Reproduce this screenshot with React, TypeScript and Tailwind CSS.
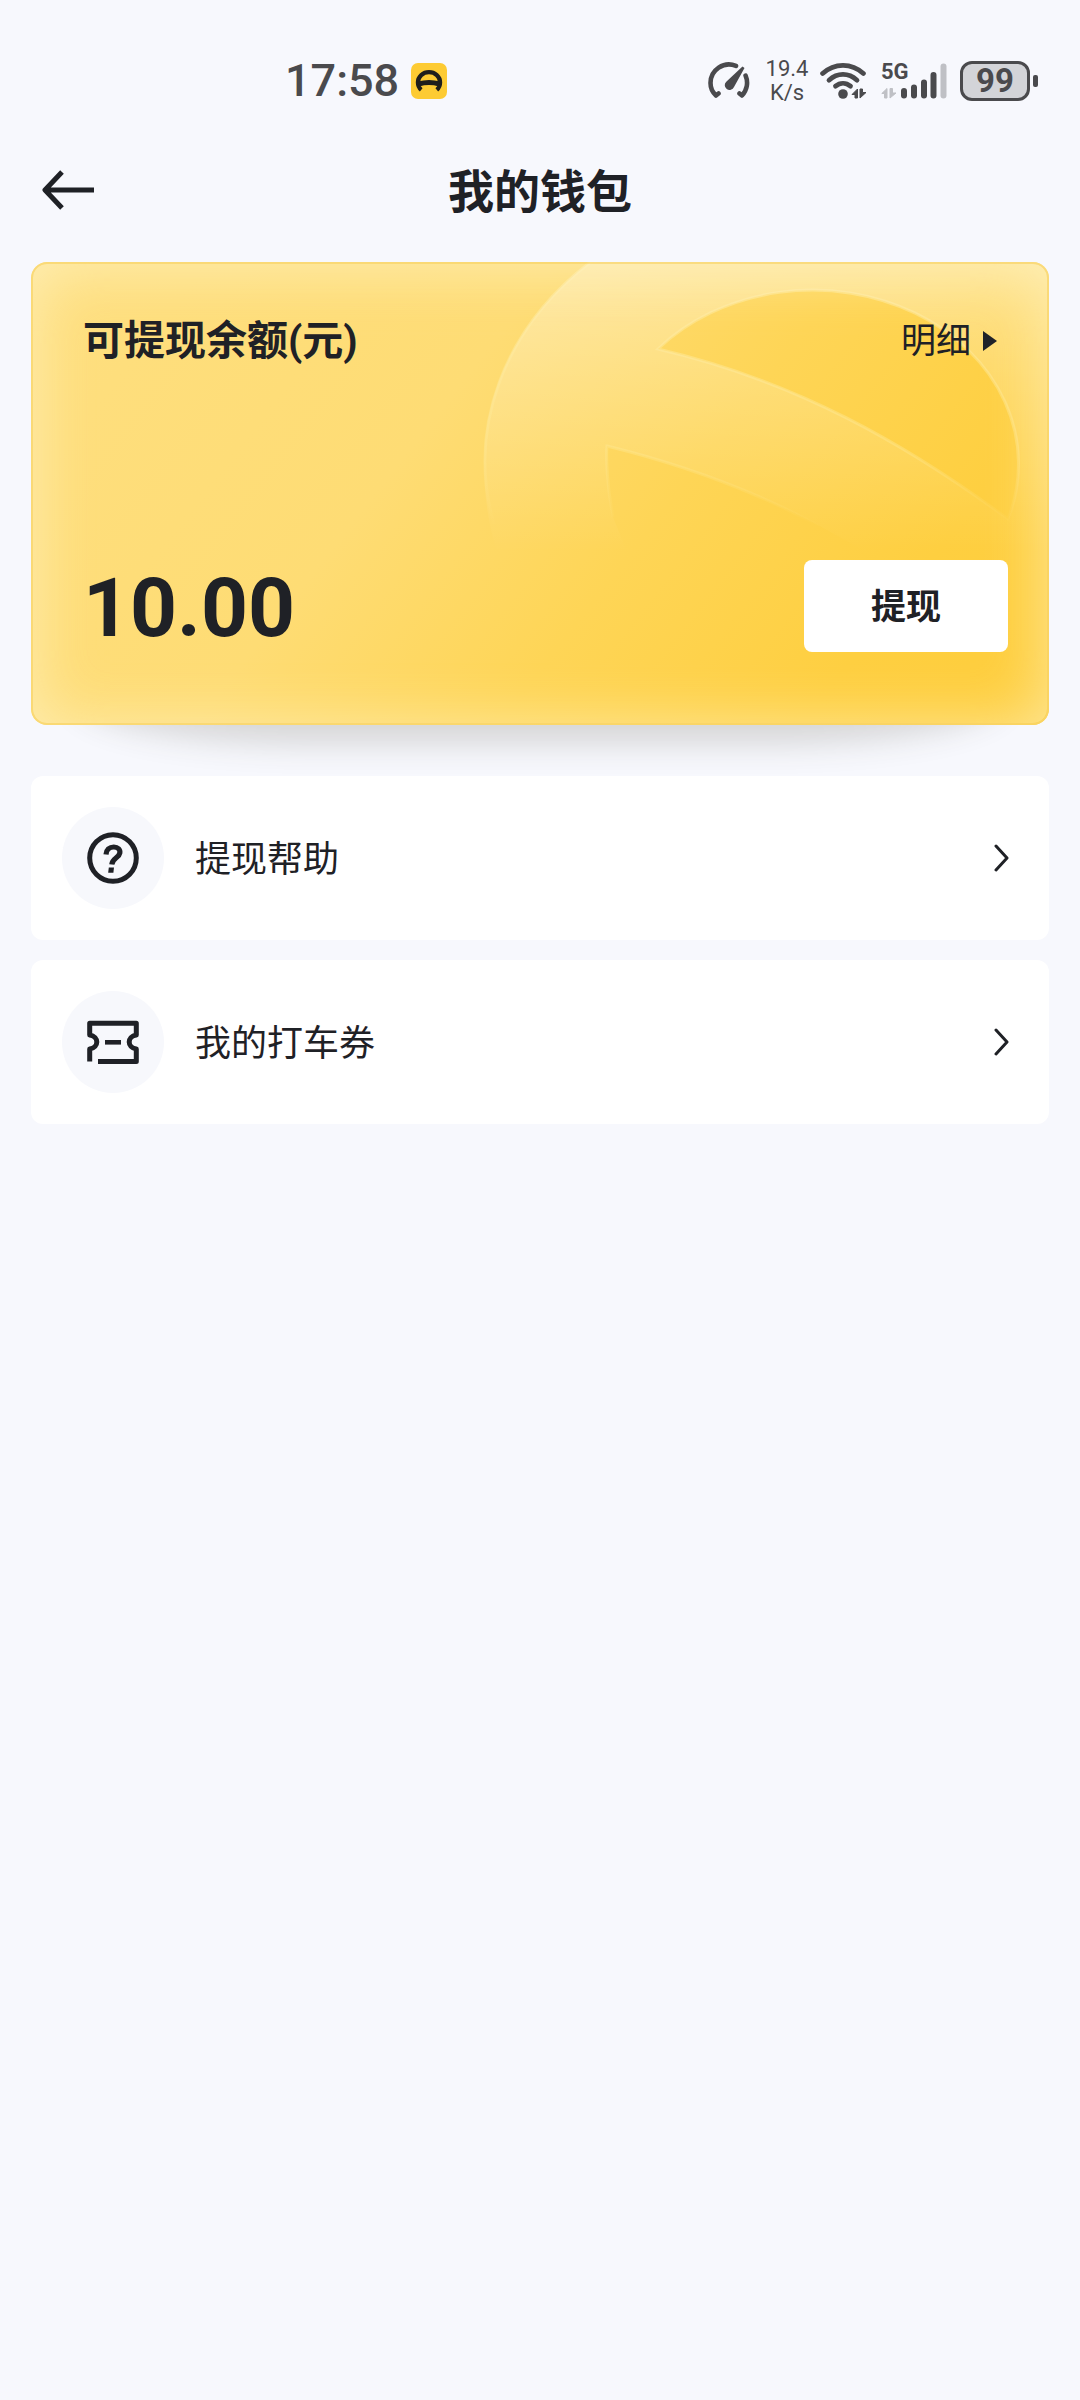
import React from "react";

function StatusBar() {
  return (
    <div className="flex h-[140px] items-start justify-between pt-[58px] pr-[42px] pl-[285px] text-[#4a4a4d]">
      <div className="flex h-[46px] items-center gap-3">
        <span className="text-[45px] leading-[46px] font-medium">17:58</span>
        <svg width="36" height="36" viewBox="0 0 36 36" aria-hidden="true">
          <rect width="36" height="36" rx="7" fill="#fdcb33" />
          <g fill="none" stroke="#1f1e1c">
            <path
              d="M10.2 26.8C7.8 24.8 6.9 22 6.9 19.5C6.9 13.5 12 9.2 18 9.2S29.1 13.5 29.1 19.5C29.1 22 28.2 24.8 25.8 26.8"
              strokeWidth="4.2"
            />
            <path d="M7.5 21Q18 18 28.5 21" strokeWidth="5" />
          </g>
        </svg>
      </div>

      <div className="flex h-[46px] items-center">
        <svg width="42" height="38" viewBox="0 0 42 38" fill="none" aria-hidden="true">
          <g stroke="#4a4a4d" strokeWidth="4.6" strokeLinecap="round" strokeLinejoin="round">
            <path d="M10.5 31.5L8 33.5C4.500 30.300 2.500 26 2.500 21A18.500 18.500 0 0 1 28 3.900" />
            <path d="M37.600 13.600A18.500 18.500 0 0 1 34 33.500L31.500 31.500" />
          </g>
          <path d="M34.500 4.500L36.500 6L26 25A4.800 4.800 0 1 1 18.500 19.500Z" fill="#4a4a4d" />
        </svg>
        <div className="ml-[14px] flex w-[46px] flex-col items-center text-[22px] leading-[24px]">
          <span>19.4</span>
          <span>K/s</span>
        </div>
        <svg className="ml-[10px]" width="48" height="38" viewBox="0 0 48 38" fill="none" aria-hidden="true">
          <g stroke="#4a4a4d" strokeWidth="4.8" strokeLinecap="round">
            <path d="M2.600 11.500C14.500 .6 31.500 .6 43.400 11.500" />
            <path d="M9 18.200C17.500 10.500 28.500 10.500 37 18.200" />
            <path d="M15.500 24.200C20 20.400 26 20.400 30.500 24.200" />
          </g>
          <circle cx="23" cy="32" r="4.8" fill="#4a4a4d" />
          <path d="M37.500 27V36H35V32.500H32ZM40 36V27H42.500V30.500H46Z" fill="#4a4a4d" stroke="#4a4a4d" strokeLinejoin="round" />
        </svg>
        <div className="relative ml-[13px] h-[38px] w-[66px]">
          <svg width="66" height="38" viewBox="0 0 66 38" fill="none" aria-hidden="true">
            <g strokeWidth="6" strokeLinecap="round">
              <path d="M23 29V33.500M33 25.500V33.500M43 20.500V33.500M52.500 13V33.500" stroke="#4a4a4d" />
              <path d="M62.500 4.500V33.500" stroke="#bfc0c5" />
            </g>
            <path d="M6 26.500V36H3.500V31.500H.8ZM9 36V26.500H11.500V31H15Z" fill="#bfc0c5" stroke="#bfc0c5" strokeLinejoin="round" />
          </svg>
          <span className="absolute top-0 left-0 text-[22px] leading-[20px] font-bold">5G</span>
        </div>
        <div className="ml-[13px] flex h-[40px] w-[70px] items-center justify-center rounded-[12px] border-[3px] border-[#4a4a4d] bg-[#d3d4d8] text-[33px] leading-[34px] font-bold">
          99
        </div>
        <div className="ml-[3px] h-[12px] w-[5px] rounded-[2px] bg-[#4a4a4d]" />
      </div>
    </div>
  );
}

function CardArt() {
  return (
    <svg
      className="pointer-events-none absolute top-0 right-0 h-[463px] w-[1018px]"
      viewBox="0 0 1018 463"
      fill="none"
      aria-hidden="true"
    >
      <defs>
        <linearGradient id="band" x1="0" y1="0" x2="0" y2="290" gradientUnits="userSpaceOnUse">
          <stop offset="0" stopColor="#fff" stopOpacity=".36" />
          <stop offset=".4" stopColor="#fff" stopOpacity=".2" />
          <stop offset=".75" stopColor="#fff" stopOpacity=".08" />
          <stop offset="1" stopColor="#fff" stopOpacity="0" />
        </linearGradient>
        <linearGradient id="edge" x1="0" y1="0" x2="0" y2="265" gradientUnits="userSpaceOnUse">
          <stop offset="0" stopColor="#ffeeb0" stopOpacity=".5" />
          <stop offset=".7" stopColor="#ffe994" stopOpacity=".4" />
          <stop offset="1" stopColor="#ffe994" stopOpacity="0" />
        </linearGradient>
      </defs>
      <path
        fillRule="evenodd"
        fill="url(#band)"
        d="M453 200A329 271.500 0 0 1 559.500 0H1018V300H850C775 252 690 212 576 184C575 195 576 225 582 255L600 300H470C458 270 453 235 453 200ZM627 87A206 174 0 0 1 977 257C875 182 765 119 627 87Z"
      />
      <g stroke="url(#edge)" strokeWidth="3">
        <path d="M463 262A329 271.500 0 0 1 559.500 0" />
        <path d="M582 255C576 225 575 195 576 184C690 212 775 252 850 300" />
        <path d="M627 87A206 174 0 0 1 977 257C875 182 765 119 627 87Z" />
      </g>
    </svg>
  );
}

function BalanceCard() {
  return (
    <section className="relative">
      <div className="absolute inset-x-[44px] bottom-0 h-[100px] rounded-[240px_/_50px] shadow-[0_20px_32px_-2px_rgba(70,66,40,0.19)]" />
      <div className="relative flex h-[463px] flex-col justify-between overflow-hidden rounded-2xl bg-[linear-gradient(128deg,#fedf80_0%,#fedc74_38%,#fed556_60%,#fecf40_82%,#fecd3a_100%)] pt-[46px] pr-[41px] pb-[73px] pl-[52px]">
        <CardArt />
        <div className="pointer-events-none absolute inset-0 rounded-2xl border-2 border-[#f8d774]/70 shadow-[inset_0_4px_64px_rgba(255,246,208,0.66)]" />
        <div className="relative flex items-center justify-between">
          <h2 className="text-[41px] leading-[64px] font-bold">可提现余额(元)</h2>
          <button type="button" className="mr-[11px] flex items-center gap-3 text-[35px] leading-[64px]">
            <span className="pt-0.5">明细</span>
            <svg width="14" height="20" viewBox="0 0 14 20" aria-hidden="true">
              <path d="M0 0L14 10L0 20Z" fill="#1f2229" />
            </svg>
          </button>
        </div>
        <div className="relative flex items-center justify-between">
          <span className="h-[92px] pt-1 text-[82px] leading-[88px] font-bold">10.00</span>
          <button type="button" className="h-[92px] w-[204px] rounded-lg bg-white pt-1 text-[35px] font-bold">
            提现
          </button>
        </div>
      </div>
    </section>
  );
}

function Row({ label, icon }: { label: string; icon: React.ReactNode }) {
  return (
    <li>
      <a href="#" className="flex h-[164px] items-center rounded-xl bg-white pr-[40px] pl-[31px]">
        <span className="flex size-[102px] items-center justify-center rounded-full bg-[#f7f8fc]">{icon}</span>
        <span className="ml-[31px] flex-1 pt-1 text-[36px] leading-[54px]">{label}</span>
        <svg width="15" height="28" viewBox="0 0 15 28" fill="none" aria-hidden="true">
          <path d="M2 2L13 14L2 26" stroke="#1f2126" strokeWidth="3" strokeLinecap="round" strokeLinejoin="round" />
        </svg>
      </a>
    </li>
  );
}

const helpIcon = (
  <svg width="52" height="52" viewBox="0 0 52 52" fill="none" aria-hidden="true">
    <circle cx="26" cy="26" r="23.300" stroke="#1f2126" strokeWidth="5" />
    <path
      d="M19 22.500C19.300 17.800 22.500 15 26.800 15C31 15 33.400 17.600 32.800 21C32 26 25.500 25.800 24.800 32.500"
      stroke="#1f2126"
      strokeWidth="5.200"
    />
    <path d="M21.800 35.500H27L26.400 40.800H21.200Z" fill="#1f2126" />
  </svg>
);

const ticketIcon = (
  <svg width="52" height="45" viewBox="0 0 52 45" fill="none" stroke="#1f2126" strokeLinejoin="round" aria-hidden="true">
    <path
      d="M2.700 41.500V29C7.500 28.300 9.800 25 9.800 22S7.500 15.700 2.700 15V3.200H49.300V15C44.500 15.700 42.200 19 42.200 22S44.500 28.300 49.300 29V41.500H11"
      strokeWidth="5"
    />
    <path d="M18 22.300H34" strokeWidth="4.600" />
  </svg>
);

export default function App() {
  return (
    <div className="min-h-screen bg-[#f7f8fd] font-[Roboto,'Noto_Sans_CJK_SC',sans-serif] text-[#1f2126]">
      <StatusBar />
      <header className="grid h-[100px] grid-cols-[1fr_auto_1fr] items-center px-[42px]">
        <button type="button" aria-label="返回" className="justify-self-start">
          <svg width="52" height="40" viewBox="0 0 52 40" fill="none" aria-hidden="true">
            <path d="M52 20H3M20 2L3 20L20 38" stroke="#1f2126" strokeWidth="5" strokeLinejoin="round" />
          </svg>
        </button>
        <h1 className="pt-1 text-[46px] leading-[64px] font-bold">我的钱包</h1>
      </header>
      <main className="px-[31px] pt-[22px]">
        <BalanceCard />
        <ul className="relative mt-[51px] flex flex-col gap-5">
          <Row label="提现帮助" icon={helpIcon} />
          <Row label="我的打车券" icon={ticketIcon} />
        </ul>
      </main>
    </div>
  );
}
